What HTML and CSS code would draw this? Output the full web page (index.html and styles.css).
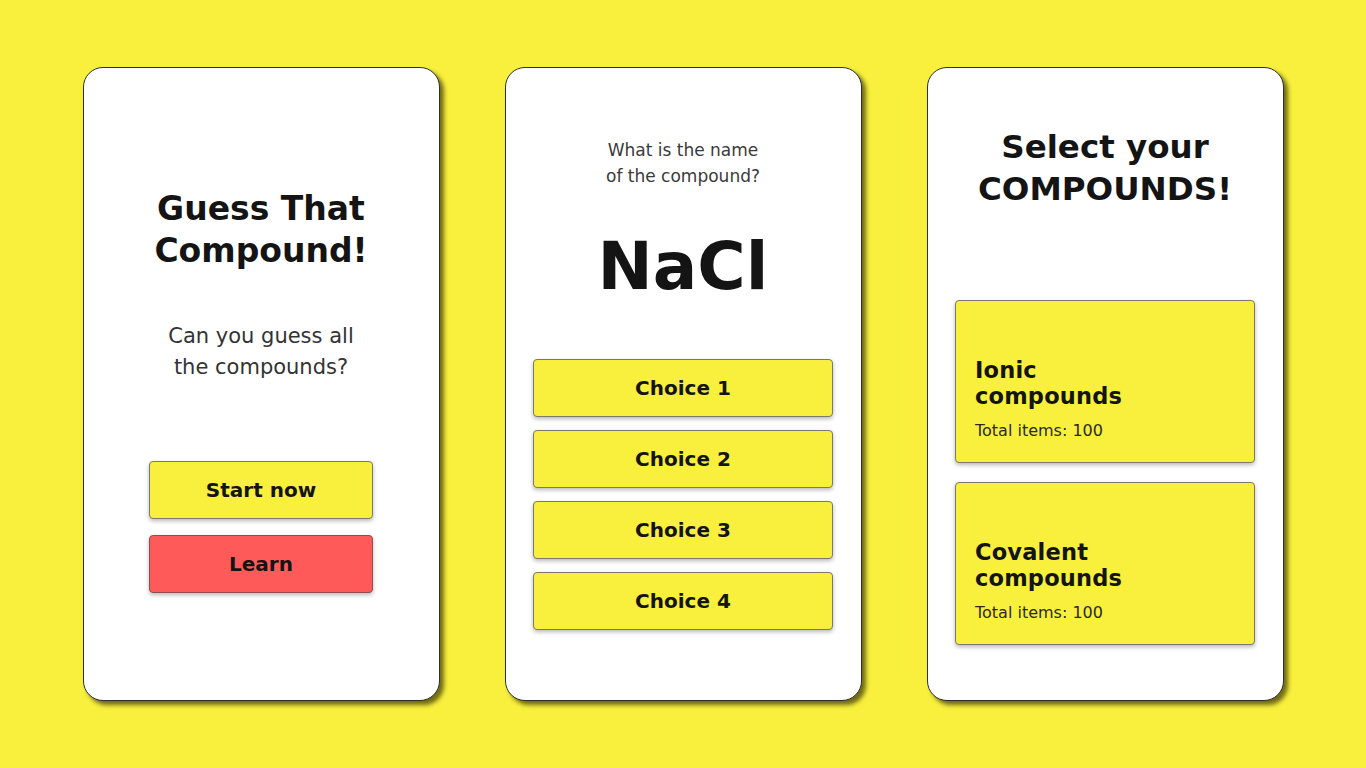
FILE: index.html
```html
<!DOCTYPE html>
<html lang="en">
<head>
<meta charset="utf-8">
<title>Guess That Compound</title>
<link rel="stylesheet" href="styles.css">
</head>
<body>
<main class="board">
  <section class="screen screen-home">
    <h1 class="home-title">Guess That<br>Compound!</h1>
    <p class="home-sub">Can you guess all<br>the compounds?</p>
    <div class="btn-stack">
      <button class="btn btn-yellow">Start now</button>
      <button class="btn btn-red">Learn</button>
    </div>
  </section>

  <section class="screen screen-quiz">
    <p class="quiz-q">What is the name<br>of the compound?</p>
    <div class="formula">NaCl</div>
    <div class="choices">
      <button class="btn btn-yellow choice">Choice 1</button>
      <button class="btn btn-yellow choice">Choice 2</button>
      <button class="btn btn-yellow choice">Choice 3</button>
      <button class="btn btn-yellow choice">Choice 4</button>
    </div>
  </section>

  <section class="screen screen-select">
    <h2 class="select-title">Select your<br>COMPOUNDS!</h2>
    <div class="sets">
      <div class="set">
        <div class="set-name">Ionic<br>compounds</div>
        <div class="set-count">Total items: 100</div>
      </div>
      <div class="set">
        <div class="set-name">Covalent<br>compounds</div>
        <div class="set-count">Total items: 100</div>
      </div>
    </div>
  </section>
</main>
</body>
</html>
```

FILE: styles.css
```css
* { box-sizing: border-box; }

html, body {
  margin: 0;
  padding: 0;
}

body {
  background: #f8f03c;
  height: 768px;
  overflow: hidden;
  font-family: "DejaVu Sans", "Inter", sans-serif;
  color: #141414;
}

.board {
  display: flex;
  justify-content: center;
  gap: 65px;
  padding-top: 67px;
}

.screen {
  width: 357px;
  height: 634px;
  background: #fff;
  border: 1.5px solid #2e2e2e;
  border-radius: 20px;
  box-shadow: 4px 4px 4px rgba(40, 35, 0, 0.65);
  display: flex;
  flex-direction: column;
  align-items: center;
}

h1, h2, p { margin: 0; }

.btn {
  font-family: inherit;
  font-weight: 700;
  font-size: 20px;
  color: #141414;
  border: 1px solid #7a7a6a;
  border-radius: 4px;
  box-shadow: 0 2px 4px rgba(0, 0, 0, 0.28);
  height: 58px;
  padding: 0;
  cursor: pointer;
}

.btn-yellow { background: #f8f03c; }
.btn-red { background: #ff5a5a; border-color: #8a5050; }

/* Home */
.home-title {
  margin-top: 120px;
  font-size: 33px;
  line-height: 42px;
  font-weight: 700;
  text-align: center;
}

.home-sub {
  margin-top: 49px;
  font-size: 21px;
  line-height: 31px;
  font-weight: 400;
  color: #333;
  text-align: center;
}

.btn-stack {
  margin-top: 78px;
  display: flex;
  flex-direction: column;
  gap: 16px;
  width: 224px;
}

/* Quiz */
.quiz-q {
  margin-top: 69px;
  font-size: 17px;
  line-height: 26px;
  color: #3a3a3a;
  text-align: center;
}

.formula {
  margin-top: 38px;
  font-size: 66px;
  line-height: 80px;
  font-weight: 700;
  color: #141414;
}

.choices {
  margin-top: 52px;
  width: 300px;
  display: flex;
  flex-direction: column;
  gap: 13px;
}

/* Select */
.select-title {
  margin-top: 58px;
  font-size: 32.5px;
  line-height: 42px;
  font-weight: 700;
  text-align: center;
}

.sets {
  margin-top: 90px;
  width: 300px;
  display: flex;
  flex-direction: column;
  gap: 19px;
}

.set {
  height: 163px;
  background: #f8f03c;
  border: 1px solid #7a7a6a;
  border-radius: 4px;
  box-shadow: 0 2px 4px rgba(0, 0, 0, 0.28);
  display: flex;
  flex-direction: column;
  justify-content: flex-end;
  padding: 0 20px 19px 19px;
}

.set-name {
  font-size: 22.5px;
  line-height: 26px;
  letter-spacing: 0.2px;
  font-weight: 700;
}

.set-count {
  margin-top: 10px;
  font-size: 16px;
  line-height: 24px;
  color: #2a2a2a;
}
```
